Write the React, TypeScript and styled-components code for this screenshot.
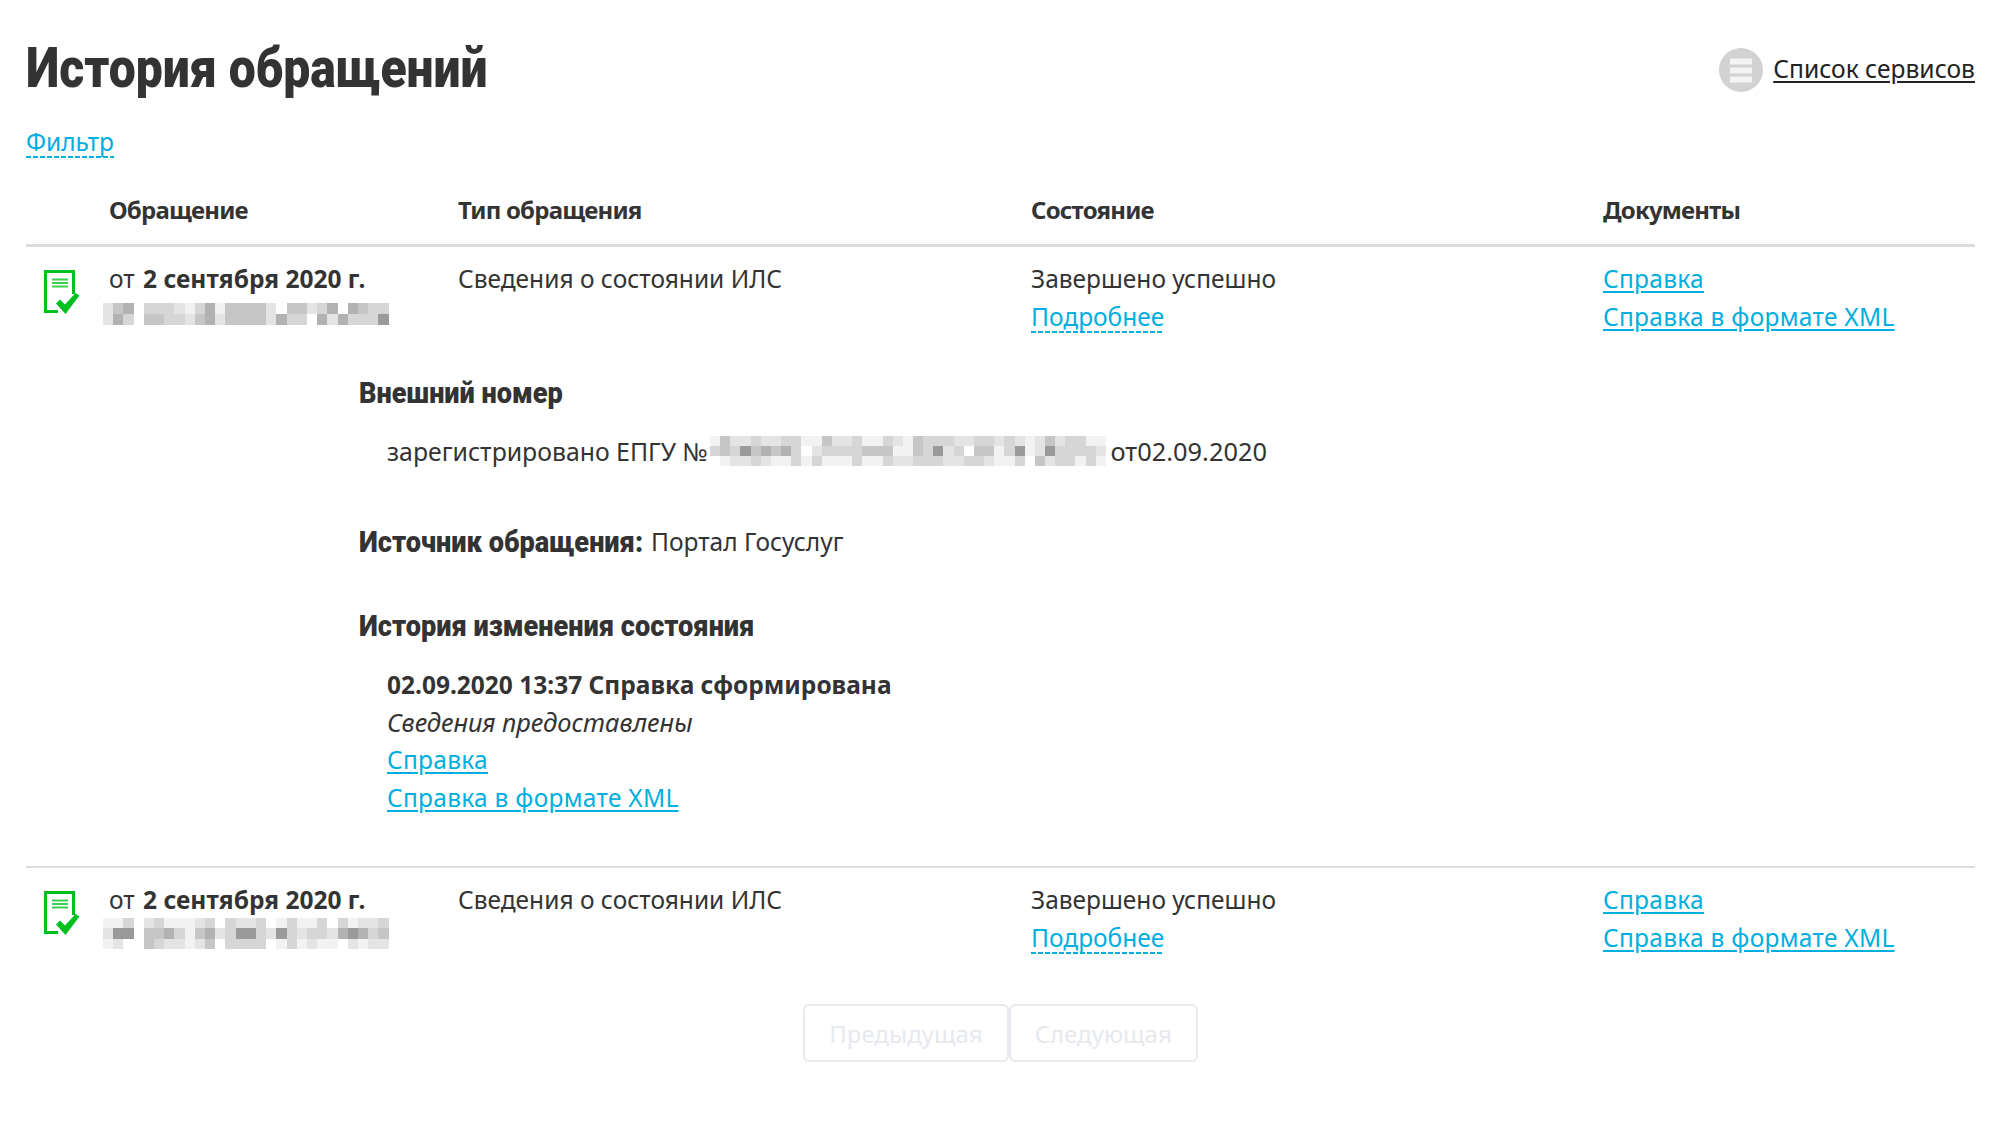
import React from 'react';
import styled, { createGlobalStyle } from 'styled-components';

const GlobalStyle = createGlobalStyle`
  html, body {
    margin: 0;
    padding: 0;
    background: #fff;
    color: #333;
    font-family: "Noto Sans", "Open Sans", sans-serif;
    font-size: 24.5px;
  }
`;

const Page = styled.div`
  box-sizing: border-box;
  width: 2000px;
  height: 1138px;
  padding: 36px 25px 0 26px;
  overflow: hidden;
`;

const TopBar = styled.div`
  display: flex;
  justify-content: space-between;
  align-items: center;
  height: 64px;
`;

const Title = styled.h1`
  margin: 0;
  font-family: Roboto, sans-serif;
  font-size: 56px;
  font-weight: 900;
  line-height: 64px;
  white-space: nowrap;
  transform: scaleX(0.858);
  transform-origin: left center;
`;

const ServiceLink = styled.a`
  display: flex;
  align-items: center;
  gap: 10px;
  color: #222;
  font-size: 24.6px;
`;

const ServiceLabel = styled.span`
  text-decoration: underline;
  text-underline-offset: 3px;
`;

const ServiceSvg = styled.svg`
  margin-top: 3px;
`;

const FilterRow = styled.div`
  margin-top: 23px;
  height: 38px;
  line-height: 38px;
`;

const DashedLink = styled.a`
  display: inline-block;
  color: #00aee0;
  line-height: 31px;
  padding-bottom: 1px;
  background: repeating-linear-gradient(90deg, #00aee0 0 5px, transparent 5px 7px) left bottom / 100% 2px no-repeat;
`;

const Link = styled.a`
  display: block;
  width: fit-content;
  color: #00aee0;
  letter-spacing: 0.28px;
  text-decoration: underline;
  text-underline-offset: 3px;
`;

const Columns = styled.div`
  display: grid;
  grid-template-columns: 83px 349px 573px 572px 1fr;
`;

const HeadRow = styled(Columns)`
  margin-top: 14px;
  height: 69px;
  align-items: center;
  border-bottom: 3px solid #ddd;
  font-weight: 700;
  font-size: 24px;
  letter-spacing: -0.8px;
`;

const Row = styled(Columns)`
  padding-top: 13px;
  line-height: 38px;
`;

const IconCell = styled.div`
  padding: 10px 0 0 18px;
`;

const Mask = styled.div`
  margin: -1px 0 0 -6px;
  height: 33px;
`;

const Strong = styled.b`
  font-weight: 700;
`;

const DateValue = styled(Strong)`
  margin-left: 2px;
`;

const Details = styled.div`
  padding: 38px 0 0 333px;
`;

const DetailHead = styled.div`
  font-family: Roboto, sans-serif;
  font-weight: 900;
  font-size: 30px;
  line-height: 38px;
  white-space: nowrap;
  transform: scaleX(0.904);
  transform-origin: left center;
`;

const DetailBody = styled.div`
  padding-left: 28px;
  line-height: 38px;
`;

const RegLine = styled(DetailBody)`
  display: flex;
  align-items: center;
  gap: 2px;
  margin-top: 20px;
  font-size: 24.8px;
  white-space: pre;
`;

const RegDate = styled.span`
  margin-left: 3px;
  font-size: 25.4px;
`;

const SourceLine = styled.div`
  display: flex;
  margin-top: 53px;
  line-height: 38px;
`;

const SourceHead = styled(DetailHead)`
  width: 292px;
`;

const HistoryHead = styled(DetailHead)`
  margin-top: 46px;
`;

const HistoryBody = styled(DetailBody)`
  margin-top: 21px;
`;

const Note = styled.i`
  display: block;
  margin-top: -1px;
  font-size: 25.4px;
`;

const Divider = styled.div`
  margin-top: 49px;
  border-top: 2px solid #ddd;
`;

const Pager = styled.div`
  display: flex;
  justify-content: center;
  margin-top: 47px;
`;

const PageButton = styled.button`
  height: 58px;
  padding: 0 24px;
  background: #fff;
  border: 2px solid #e6e9ee;
  border-radius: 6px;
  color: #e6e9ee;
  font: inherit;
  font-size: 24px;
`;

function ServiceIcon() {
  return (
    <ServiceSvg width="44" height="44" viewBox="0 0 44 44">
      <circle cx="22" cy="22" r="22" fill="#d2d2d2" />
      <rect x="11" y="10.5" width="22" height="6" fill="#f4f4f4" />
      <rect x="11" y="19.5" width="22" height="6" fill="#f4f4f4" />
      <rect x="11" y="28.5" width="22" height="6" fill="#f4f4f4" />
    </ServiceSvg>
  );
}

function DocIcon() {
  return (
    <svg width="36" height="44" viewBox="0 0 36 44">
      <path d="M29.5 24V1.5H1.5V41.5H14" fill="none" stroke="#00c020" strokeWidth="3" />
      <path d="M8 9.5H24M8 13H24M8 16.5H24" stroke="#3bd04f" strokeWidth="1.8" />
      <path d="M12 33.5L16 29.5 21 34.5 31.5 23 35.5 25.5 21.5 44z" fill="#00c020" />
    </svg>
  );
}

// пикселизованные номера: строки оттенков, по одной букве на клетку
const shades: Record<string, string> = {
  '.': '#ffffff',
  a: '#f2f2f2',
  b: '#e4e4e4',
  c: '#d6d6d6',
  d: '#c6c6c6',
  e: '#b2b2b2',
  f: '#9a9a9a',
};

function Mosaic({ rows, cell, cellH }: { rows: string[]; cell: number; cellH: number }) {
  return (
    <svg width={rows[0].length * cell} height={rows.length * cellH} shapeRendering="crispEdges">
      {rows.map((row, y) =>
        row.split('').map((c, x) => (
          <rect key={`${x}-${y}`} x={x * cell} y={y * cellH} width={cell} height={cellH} fill={shades[c]} />
        )),
      )}
    </svg>
  );
}

const firstMask = [
  'bde.cccbaceaddddb.ddbce.edcc',
  'bec.ddccbdebddddbecc.ebecccf',
];
const secondMask = [
  'aac.bcaaabc.cbbc.acaac.cabbc',
  'bff.ddecadebcffcbfcbccbefecd',
  'ab..dcbbabd.cccc.acabaa.babb',
];
const regMask = [
  'adbbcbbccaadbbcaacbadcccbbccbcbabdbccaa',
  'cdcfdedec.bccccdddaadcfbc.ddacfabfccccb',
  '.abbcbaacacaaacaacbbcccbbccbaac.dbccaca',
];

function RequestRow({ mask }: { mask: string[] }) {
  return (
    <Row>
      <IconCell>
        <DocIcon />
      </IconCell>
      <div>
        <div>
          от <DateValue>2 сентября 2020 г.</DateValue>
        </div>
        <Mask>
          <Mosaic rows={mask} cell={10.2} cellH={mask.length === 2 ? 11 : 10.3} />
        </Mask>
      </div>
      <div>Сведения о состоянии ИЛС</div>
      <div>
        <div>Завершено успешно</div>
        <DashedLink>Подробнее</DashedLink>
      </div>
      <div>
        <Link>Справка</Link>
        <Link>Справка в формате XML</Link>
      </div>
    </Row>
  );
}

export default function App() {
  return (
    <Page>
      <GlobalStyle />
      <TopBar>
        <Title>История обращений</Title>
        <ServiceLink>
          <ServiceIcon />
          <ServiceLabel>Список сервисов</ServiceLabel>
        </ServiceLink>
      </TopBar>
      <FilterRow>
        <DashedLink>Фильтр</DashedLink>
      </FilterRow>
      <HeadRow>
        <div />
        <div>Обращение</div>
        <div>Тип обращения</div>
        <div>Состояние</div>
        <div>Документы</div>
      </HeadRow>
      <RequestRow mask={firstMask} />
      <Details>
        <DetailHead>Внешний номер</DetailHead>
        <RegLine>
          зарегистрировано ЕПГУ №<Mosaic rows={regMask} cell={10.15} cellH={10} />
          <RegDate>от02.09.2020</RegDate>
        </RegLine>
        <SourceLine>
          <SourceHead>Источник обращения:</SourceHead>
          <span>Портал Госуслуг</span>
        </SourceLine>
        <HistoryHead>История изменения состояния</HistoryHead>
        <HistoryBody>
          <div>
            <Strong>02.09.2020 13:37 Справка сформирована</Strong>
          </div>
          <Note>Сведения предоставлены</Note>
          <Link>Справка</Link>
          <Link>Справка в формате XML</Link>
        </HistoryBody>
      </Details>
      <Divider />
      <RequestRow mask={secondMask} />
      <Pager>
        <PageButton disabled>Предыдущая</PageButton>
        <PageButton disabled>Следующая</PageButton>
      </Pager>
    </Page>
  );
}
